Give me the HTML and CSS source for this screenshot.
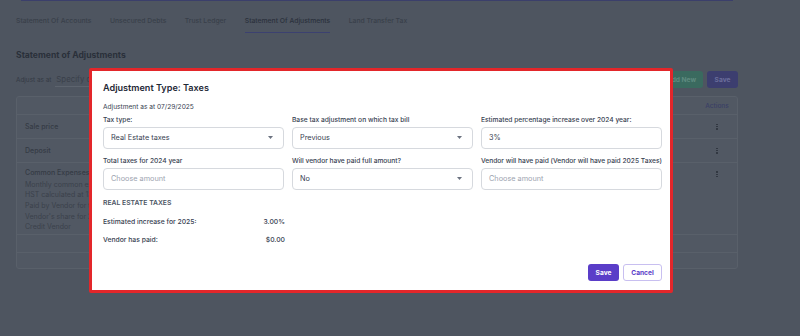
FILE: index.html
```html
<!DOCTYPE html>
<html lang="en">
<head>
    <meta charset="UTF-8">
    <meta name="viewport" content="width=device-width, initial-scale=1.0">
    <title>Statement of Adjustments</title>
    <link rel="stylesheet" href="styles.css">
</head>
<body>
    <div class="page">
        <div class="topbar"></div>
        <nav class="tabs">
            <a class="tab">Statement Of Accounts</a>
            <a class="tab">Unsecured Debts</a>
            <a class="tab">Trust Ledger</a>
            <a class="tab active">Statement Of Adjustments</a>
            <a class="tab">Land Transfer Tax</a>
        </nav>

        <section class="content">
            <h1 class="page-title">Statement of Adjustments</h1>
            <div class="toolbar">
                <div class="adjust-date">
                    <span class="adjust-label">Adjust as at</span>
                    <span class="date-input">Specify date</span>
                </div>
                <div class="toolbar-actions">
                    <button class="btn-dim green">Add New</button>
                    <button class="btn-dim purple">Save</button>
                </div>
            </div>

            <div class="card">
                <div class="row head">
                    <span class="cell-main"></span>
                    <span class="cell-actions">Actions</span>
                </div>
                <div class="row item">
                    <span class="cell-main">Sale price</span>
                    <span class="cell-actions"><span class="kebab"><i></i><i></i><i></i></span></span>
                </div>
                <div class="row item">
                    <span class="cell-main">Deposit</span>
                    <span class="cell-actions"><span class="kebab"><i></i><i></i><i></i></span></span>
                </div>
                <div class="row item tall">
                    <div class="cell-main">
                        <div>Common Expenses</div>
                        <div class="sub">
                            <div>Monthly common expenses</div>
                            <div>HST calculated at 13%</div>
                            <div>Paid by Vendor for the month</div>
                            <div>Vendor's share for 2025</div>
                            <div>Credit Vendor</div>
                        </div>
                    </div>
                    <span class="cell-actions"><span class="kebab"><i></i><i></i><i></i></span></span>
                </div>
                <div class="row blank"></div>
                <div class="row blank last"></div>
            </div>
        </section>
    </div>

    <div class="modal">
        <h2 class="modal-title">Adjustment Type: Taxes</h2>
        <p class="modal-date">Adjustment as at 07/29/2025</p>

        <div class="fields">
            <div class="field">
                <label>Tax type:</label>
                <div class="control">
                    <span>Real Estate taxes</span>
                    <svg class="caret" width="5" height="3" viewBox="0 0 5 3"><path d="M0 0h5L2.5 3z" fill="#6b7280"/></svg>
                </div>
            </div>
            <div class="field">
                <label>Base tax adjustment on which tax bill</label>
                <div class="control">
                    <span>Previous</span>
                    <svg class="caret" width="5" height="3" viewBox="0 0 5 3"><path d="M0 0h5L2.5 3z" fill="#6b7280"/></svg>
                </div>
            </div>
            <div class="field">
                <label>Estimated percentage increase over 2024 year:</label>
                <div class="control"><span>3%</span></div>
            </div>
            <div class="field">
                <label>Total taxes for 2024 year</label>
                <div class="control"><span class="placeholder">Choose amount</span></div>
            </div>
            <div class="field">
                <label>Will vendor have paid full amount?</label>
                <div class="control">
                    <span>No</span>
                    <svg class="caret" width="5" height="3" viewBox="0 0 5 3"><path d="M0 0h5L2.5 3z" fill="#6b7280"/></svg>
                </div>
            </div>
            <div class="field">
                <label>Vendor will have paid (Vendor will have paid 2025 Taxes)</label>
                <div class="control"><span class="placeholder">Choose amount</span></div>
            </div>
        </div>

        <div class="summary">
            <div class="summary-title">REAL ESTATE TAXES</div>
            <div class="summary-row"><span>Estimated increase for 2025:</span><span>3.00%</span></div>
            <div class="summary-row"><span>Vendor has paid:</span><span>$0.00</span></div>
        </div>

        <div class="modal-footer">
            <button class="btn-save">Save</button>
            <button class="btn-cancel">Cancel</button>
        </div>
    </div>
</body>
</html>
```

FILE: styles.css
```css
body {
    margin: 0;
    font-family: Inter, "Noto Sans", sans-serif;
    background-color: #4e5560;
    width: 800px;
    height: 336px;
    overflow: hidden;
    position: relative;
}

/* page behind the dialog (already dimmed) */
.page {
    height: 336px;
}

.topbar {
    height: 1px;
    margin: 0 67px 0 21px;
    background-color: #3b3f6b;
}

.tabs {
    display: flex;
    gap: 18.5px;
    padding-left: 16px;
}

.tab {
    font-size: 6.8px;
    font-weight: 500;
    line-height: 10px;
    color: #39404a;
    padding: 15px 0 6px;
    border-bottom: 1px solid transparent;
    white-space: nowrap;
}

.tab.active {
    color: #2b313c;
    border-bottom-color: #3c4170;
}

.content {
    padding: 0 62px 0 16px;
}

.page-title {
    margin: 16px 0 0;
    font-size: 8.6px;
    font-weight: 700;
    line-height: 12px;
    color: #2a303a;
}

.toolbar {
    margin-top: 10px;
    height: 17px;
    display: flex;
    justify-content: space-between;
    align-items: center;
}

.adjust-date {
    display: flex;
    align-items: center;
    gap: 4px;
}

.adjust-label {
    font-size: 6.4px;
    color: #343a44;
}

.date-input {
    font-size: 7.8px;
    color: #3a404a;
    width: 120px;
    padding: 2px 0 2px 1px;
    border-bottom: 1px solid #5d646e;
}

.toolbar-actions {
    display: flex;
    gap: 4px;
}

.btn-dim {
    border: none;
    border-radius: 3px;
    height: 17px;
    font-family: inherit;
    font-size: 6.6px;
    font-weight: 700;
    padding: 0 7px;
}

.btn-dim.green {
    background-color: #3a6a5f;
    color: #5f8b80;
}

.btn-dim.purple {
    background-color: #3c3e6f;
    color: #6b6e9c;
    width: 31px;
}

.card {
    margin-top: 8px;
    border: 1px solid #59606a;
    border-radius: 3px;
    background-color: #515863;
}

.row {
    display: flex;
    border-bottom: 1px solid #59606a;
    font-size: 7px;
    font-weight: 500;
    color: #353b45;
}

.row.head {
    height: 17px;
    align-items: center;
}

.row.item {
    height: 23px;
    align-items: center;
}

.row.tall {
    height: 71px;
    align-items: flex-start;
}

.row.blank {
    height: 17px;
}

.row.blank.last {
    height: 15px;
    border-bottom: none;
}

.cell-main {
    flex: 1;
    padding-left: 8px;
}

.row.tall .cell-main {
    padding-top: 5px;
    line-height: 10px;
}

.row.tall .cell-actions {
    padding-top: 7px;
}

.sub {
    margin-top: 1.5px;
    line-height: 10.7px;
    color: #3b414b;
    font-weight: 400;
}

.cell-actions {
    width: 38px;
    text-align: center;
    font-size: 6.5px;
    color: #3a3f66;
    padding-right: 1px;
}

.kebab {
    display: inline-flex;
    flex-direction: column;
    gap: 1px;
    vertical-align: middle;
}

.kebab i {
    width: 1.3px;
    height: 1.3px;
    border-radius: 50%;
    background-color: #2d333d;
}

/* dialog */
.modal {
    position: absolute;
    left: 89px;
    top: 68px;
    width: 584px;
    height: 225px;
    box-sizing: border-box;
    border: 3px solid #e3262a;
    border-radius: 2px;
    background-color: #fff;
    padding: 11px 8px 9px 11px;
    display: flex;
    flex-direction: column;
}

.modal-title {
    margin: 0;
    font-size: 9.1px;
    font-weight: 600;
    line-height: 12px;
    color: #1f2937;
}

.modal-date {
    margin: 9px 0 0;
    font-size: 6.6px;
    line-height: 9px;
    color: #374151;
}

.fields {
    margin-top: 3.5px;
    display: grid;
    grid-template-columns: repeat(3, 181px);
    column-gap: 8px;
    row-gap: 8px;
}

.field label {
    display: block;
    font-size: 6.65px;
    font-weight: 500;
    line-height: 9px;
    color: #374151;
    white-space: nowrap;
}

.control {
    margin-top: 2.5px;
    height: 21.5px;
    box-sizing: border-box;
    border: 1px solid #d6d9de;
    border-radius: 4px;
    padding: 0 10px 0 7px;
    display: flex;
    align-items: center;
    justify-content: space-between;
    font-size: 7.3px;
    color: #374151;
}

.placeholder {
    color: #9ca3af;
}

.summary {
    margin-top: 8.5px;
    width: 182px;
    font-size: 6.8px;
    line-height: 9px;
    color: #374151;
}

.summary-title {
    font-weight: 600;
    color: #4b5563;
}

.summary-row {
    margin-top: 9.5px;
    display: flex;
    justify-content: space-between;
    font-weight: 500;
}

.summary-row + .summary-row {
    margin-top: 9px;
}

.modal-footer {
    margin-top: auto;
    display: flex;
    justify-content: flex-end;
    gap: 4px;
}

.btn-save,
.btn-cancel {
    height: 17px;
    border-radius: 3px;
    font-family: inherit;
    font-size: 6.6px;
    font-weight: 700;
    padding: 0;
}

.btn-save {
    width: 31px;
    border: none;
    background-color: #5a3dc8;
    color: #fff;
}

.btn-cancel {
    width: 39px;
    border: 1px solid #c8bff0;
    background-color: #fff;
    color: #5a3dc8;
}
```
